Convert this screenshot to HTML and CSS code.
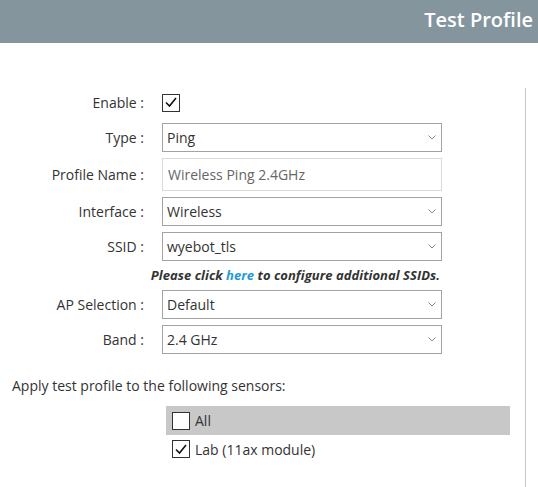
FILE: index.html
```html
<!DOCTYPE html>
<html>
<head>
<meta charset="utf-8">
<link rel="stylesheet" href="styles.css">
</head>
<body>
<div class="header"><h1 class="title">Test Profile</h1></div>
<div class="panel">
  <div class="form">
    <div class="label">Enable :</div>
    <div class="control"><span class="cb checked"><svg viewBox="0 0 18 18" width="18" height="18"><polyline points="4,9.5 7.5,13 14,5" fill="none" stroke="#111" stroke-width="1.6"/></svg></span></div>

    <div class="label">Type :</div>
    <div class="select"><span>Ping</span><svg class="chev" viewBox="0 0 8 5" width="8" height="5"><polyline points="0.5,0.5 4,4 7.5,0.5" fill="none" stroke="#8a8a8a" stroke-width="1"/></svg></div>

    <div class="label">Profile Name :</div>
    <div class="input">Wireless Ping 2.4GHz</div>

    <div class="label">Interface :</div>
    <div class="select"><span>Wireless</span><svg class="chev" viewBox="0 0 8 5" width="8" height="5"><polyline points="0.5,0.5 4,4 7.5,0.5" fill="none" stroke="#8a8a8a" stroke-width="1"/></svg></div>

    <div class="label">SSID :</div>
    <div class="select"><span>wyebot_tls</span><svg class="chev" viewBox="0 0 8 5" width="8" height="5"><polyline points="0.5,0.5 4,4 7.5,0.5" fill="none" stroke="#8a8a8a" stroke-width="1"/></svg></div>

    <div class="note">Please click <a class="link">here</a> to configure additional SSIDs.</div>

    <div class="label">AP Selection :</div>
    <div class="select"><span>Default</span><svg class="chev" viewBox="0 0 8 5" width="8" height="5"><polyline points="0.5,0.5 4,4 7.5,0.5" fill="none" stroke="#8a8a8a" stroke-width="1"/></svg></div>

    <div class="label">Band :</div>
    <div class="select"><span>2.4 GHz</span><svg class="chev" viewBox="0 0 8 5" width="8" height="5"><polyline points="0.5,0.5 4,4 7.5,0.5" fill="none" stroke="#8a8a8a" stroke-width="1"/></svg></div>
  </div>

  <p class="apply">Apply test profile to the following sensors:</p>

  <div class="sensors">
    <div class="sensor all"><span class="cb"></span><span>All</span></div>
    <div class="sensor"><span class="cb checked"><svg viewBox="0 0 18 18" width="18" height="18"><polyline points="4,9.5 7.5,13 14,5" fill="none" stroke="#111" stroke-width="1.6"/></svg></span><span>Lab (11ax module)</span></div>
  </div>
</div>
</body>
</html>
```
FILE: styles.css
```css
html, body {
  margin: 0;
  padding: 0;
  background: #fff;
}
body {
  font-family: "Open Sans", "Liberation Sans", sans-serif;
  font-size: 14px;
  color: #333;
  width: 538px;
  height: 487px;
  overflow: hidden;
}
.header {
  height: 43px;
  background: #84959e;
  display: flex;
  align-items: center;
  justify-content: flex-end;
  padding-right: 5px;
}
.title {
  margin: 0 0 4px 0;
  font-size: 20px;
  font-weight: 600;
  color: #fff;
}
.panel {
  margin-top: 45px;
  width: 525px;
  height: 399px;
  border-right: 1px solid #c8c8c8;
}
.form {
  display: grid;
  grid-template-columns: 144px 280px;
  column-gap: 18px;
  row-gap: 6px;
  align-items: center;
}
.label {
  text-align: right;
  white-space: nowrap;
}
.control {
  height: 29px;
  display: flex;
  align-items: center;
}
.cb {
  box-sizing: border-box;
  width: 18px;
  height: 18px;
  border: 1.5px solid #333;
  background: #fff;
  display: inline-flex;
  align-items: center;
  justify-content: center;
  position: relative;
}
.cb svg {
  position: absolute;
  left: -1.5px;
  top: -1.5px;
}
.select {
  box-sizing: border-box;
  height: 29px;
  border: 1px solid #a3a3a3;
  display: flex;
  align-items: center;
  justify-content: space-between;
  padding: 0 5px 0 4px;
  color: #333;
}
.input {
  box-sizing: border-box;
  height: 33px;
  border: 1px solid #dadada;
  display: flex;
  align-items: center;
  padding-left: 5px;
  color: #666;
}
.note {
  grid-column: 1 / 3;
  justify-self: end;
  margin-right: 2px;
  height: 17px;
  line-height: 17px;
  font-size: 13px;
  font-weight: 700;
  font-style: italic;
  color: #333;
  letter-spacing: 0.05px;
}
.link {
  color: #1f9ad8;
}
.apply {
  margin: 22px 0 0 12px;
  line-height: 20px;
}
.sensors {
  margin: 10px 0 0 166px;
  width: 344px;
}
.sensor {
  display: flex;
  align-items: center;
  gap: 5px;
  height: 29px;
  padding-left: 6px;
}
.sensor.all {
  background: #c8c8c8;
}
.sensor + .sensor {
  margin-top: 2px;
  height: 24px;
}
```
